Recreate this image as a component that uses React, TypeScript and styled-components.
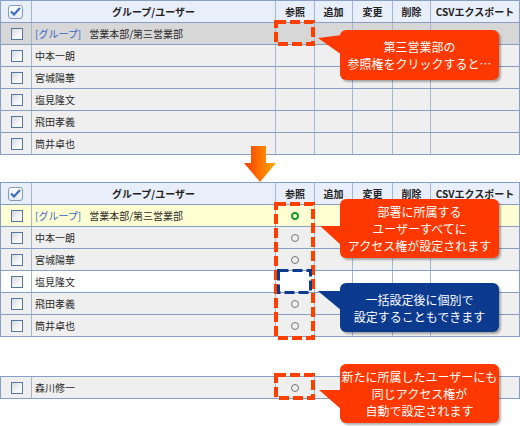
import styled, { createGlobalStyle } from "styled-components";

type Tone = "plain" | "dark" | "yellow" | "white";
type Mark = "on" | "off" | "none";

interface Iuser {
  id: number;
  name: string;
  group?: boolean;
  tone: Tone;
  mark: Mark;
}

const before: Iuser[] = [
  { id: 1, name: "営業本部/第三営業部", group: true, tone: "dark", mark: "none" },
  { id: 2, name: "中本一朗", tone: "plain", mark: "none" },
  { id: 3, name: "宮城陽華", tone: "plain", mark: "none" },
  { id: 4, name: "塩見隆文", tone: "plain", mark: "none" },
  { id: 5, name: "飛田孝義", tone: "plain", mark: "none" },
  { id: 6, name: "筒井卓也", tone: "plain", mark: "none" },
];

const after: Iuser[] = [
  { id: 1, name: "営業本部/第三営業部", group: true, tone: "yellow", mark: "on" },
  { id: 2, name: "中本一朗", tone: "plain", mark: "off" },
  { id: 3, name: "宮城陽華", tone: "plain", mark: "off" },
  { id: 4, name: "塩見隆文", tone: "white", mark: "none" },
  { id: 5, name: "飛田孝義", tone: "plain", mark: "off" },
  { id: 6, name: "筒井卓也", tone: "plain", mark: "off" },
];

const added: Iuser[] = [{ id: 7, name: "森川修一", tone: "plain", mark: "off" }];

const heads = ["参照", "追加", "変更", "削除", "CSVエクスポート"];

const GlobalStyle = createGlobalStyle`
  html, body { margin: 0; padding: 0; background: #fff; }
  body { font-family: "Noto Sans CJK JP", "Noto Sans", sans-serif; }
`;

const HeadCheck = () => (
  <CheckOn>
    <svg width="11" height="9" viewBox="0 0 11 9">
      <path d="M1 4.5 L4 7.5 L10 1" fill="none" stroke="#3b6fbf" strokeWidth="2.2" />
    </svg>
  </CheckOn>
);

const Header = () => (
  <Row $tone="head">
    <Cell $center>
      <HeadCheck />
    </Cell>
    <Cell $center>
      <HeadText>グループ/ユーザー</HeadText>
    </Cell>
    {heads.map((h) => (
      <Cell key={h} $center>
        <HeadText>{h}</HeadText>
      </Cell>
    ))}
  </Row>
);

const Body = ({ list }: { list: Iuser[] }) => (
  <>
    {list.map((item) => (
      <Row key={item.id} $tone={item.tone}>
        <Cell $center>
          <Box />
        </Cell>
        <Cell>
          {item.group && <GroupTag>[グループ]</GroupTag>}
          <Name>{item.name}</Name>
        </Cell>
        <Cell $center>{item.mark !== "none" && <Ring $on={item.mark === "on"} />}</Cell>
        <Cell />
        <Cell />
        <Cell />
        <Cell />
      </Row>
    ))}
  </>
);

const App = () => {
  return (
    <>
      <GlobalStyle />
      <Page>
        <Table>
          <Header />
          <Body list={before} />
        </Table>
        <Table $gap={27}>
          <Header />
          <Body list={after} />
        </Table>
        <Table $gap={39}>
          <Body list={added} />
        </Table>

        <Arrow />

        <Dash $x={274} $y={20} $w={41} $h={26}>
          <svg width="41" height="26">
            <rect x="2" y="2" width="37" height="22" fill="none" stroke="#ff3f00" strokeWidth="4" strokeDasharray="10 4" />
          </svg>
        </Dash>
        <Dash $x={274} $y={202} $w={41} $h={138}>
          <svg width="41" height="138">
            <rect x="2" y="2" width="37" height="134" fill="none" stroke="#ff3f00" strokeWidth="4" strokeDasharray="10 4" />
          </svg>
        </Dash>
        <Dash $x={277} $y={269} $w={35} $h={25}>
          <svg width="35" height="25">
            <rect x="1.5" y="1.5" width="32" height="22" fill="none" stroke="#0b3a8f" strokeWidth="3" strokeDasharray="10 4" />
          </svg>
        </Dash>
        <Dash $x={274} $y={373} $w={41} $h={27}>
          <svg width="41" height="27">
            <rect x="2" y="2" width="37" height="23" fill="none" stroke="#ff3f00" strokeWidth="4" strokeDasharray="10 4" />
          </svg>
        </Dash>

        <Callout $x={340} $y={30} $h={50} $tip={8} $base={5} $blue={false}>
          第三営業部の
          <br />
          参照権をクリックすると…
        </Callout>
        <Callout $x={340} $y={199} $h={59} $tip={25} $base={27} $blue={false}>
          部署に所属する
          <br />
          ユーザーすべてに
          <br />
          アクセス権が設定されます
        </Callout>
        <Callout $x={340} $y={283} $h={49} $tip={8} $base={8} $blue>
          一括設定後に個別で
          <br />
          設定することもできます
        </Callout>
        <Callout $x={340} $y={364} $h={59} $tip={25} $base={26} $blue={false}>
          新たに所属したユーザーにも
          <br />
          同じアクセス権が
          <br />
          自動で設定されます
        </Callout>
      </Page>
    </>
  );
};

const Page = styled.div`
  position: relative;
  width: 520px;
  height: 426px;
  overflow: hidden;
  background: #fff;
`;

const Table = styled.div<{ $gap?: number }>`
  width: 520px;
  box-sizing: border-box;
  margin-top: ${(p) => p.$gap || 0}px;
  border: 1px solid #869fc2;
  border-bottom: none;
`;

const tones: Record<string, string> = {
  head: "#e8eefa",
  plain: "#efefef",
  dark: "#d7d7d7",
  yellow: "#ffffd4",
  white: "#ffffff",
};

const Row = styled.div<{ $tone: string }>`
  display: grid;
  grid-template-columns: 31px 244px 39px 38px 40px 38px 1fr;
  height: 22px;
  box-sizing: border-box;
  border-bottom: 1px solid #869fc2;
  background: ${(p) => tones[p.$tone]};
`;

const Cell = styled.div<{ $center?: boolean }>`
  display: flex;
  align-items: center;
  justify-content: ${(p) => (p.$center ? "center" : "flex-start")};
  padding-left: ${(p) => (p.$center ? 0 : 3)}px;
  box-sizing: border-box;
  border-right: 1px solid #a4b7d2;
  font-size: 10px;
  color: #333;
  white-space: nowrap;
  &:last-child {
    border-right: none;
  }
`;

const HeadText = styled.span`
  font-weight: bold;
  color: #222;
  font-size: 10px;
`;

const GroupTag = styled.span`
  color: #3a68c4;
  margin-right: 8px;
`;

const Name = styled.span`
  color: #2a2a2a;
`;

const Box = styled.span`
  display: block;
  width: 12px;
  height: 12px;
  box-sizing: border-box;
  margin-left: 1px;
  border: 1px solid #55779f;
  background: linear-gradient(135deg, #d4d8de 0%, #f4f5f7 60%, #ffffff 100%);
`;

const CheckOn = styled.span`
  display: flex;
  align-items: center;
  justify-content: center;
  width: 15px;
  height: 14px;
  box-sizing: border-box;
  margin-left: -1px;
  border: 1px solid #7f9cc3;
  border-radius: 3px;
  background: linear-gradient(180deg, #ffffff 0%, #e6ecf5 100%);
`;

const Ring = styled.span<{ $on: boolean }>`
  display: block;
  width: 8px;
  height: 8px;
  box-sizing: border-box;
  border-radius: 50%;
  border: ${(p) => (p.$on ? "2px solid #1f9a2a" : "1.5px solid #777")};
`;

const Arrow = styled.div`
  position: absolute;
  left: 244px;
  top: 146px;
  width: 32px;
  height: 36px;
  background: linear-gradient(90deg, #ff3a00 0%, #ff7800 55%, #ffae00 100%);
  clip-path: polygon(7px 0, 22px 0, 22px 17px, 32px 17px, 16px 36px, 0 17px, 7px 17px);
`;

const Dash = styled.div<{ $x: number; $y: number; $w: number; $h: number }>`
  position: absolute;
  left: ${(p) => p.$x}px;
  top: ${(p) => p.$y}px;
  width: ${(p) => p.$w}px;
  height: ${(p) => p.$h}px;
  svg {
    display: block;
  }
`;

const Callout = styled.div<{ $x: number; $y: number; $h: number; $tip: number; $base: number; $blue: boolean }>`
  position: absolute;
  left: ${(p) => p.$x}px;
  top: ${(p) => p.$y}px;
  width: 159px;
  height: ${(p) => p.$h}px;
  display: flex;
  align-items: center;
  justify-content: center;
  text-align: center;
  font-size: 12px;
  line-height: 17px;
  color: #fff;
  border-radius: 6px;
  background: ${(p) => (p.$blue ? "#0b3a8f" : "#ff3800")};
  box-shadow: 2px 2px 2px rgba(0, 0, 0, 0.3);
  &::before {
    content: "";
    position: absolute;
    left: -22px;
    top: ${(p) => p.$base}px;
    width: 24px;
    height: 20px;
    background: ${(p) => (p.$blue ? "#0b3a8f" : "#ff3800")};
    clip-path: polygon(0 ${(p) => p.$tip - p.$base}px, 100% 0, 100% 100%);
  }
`;

export default App;
